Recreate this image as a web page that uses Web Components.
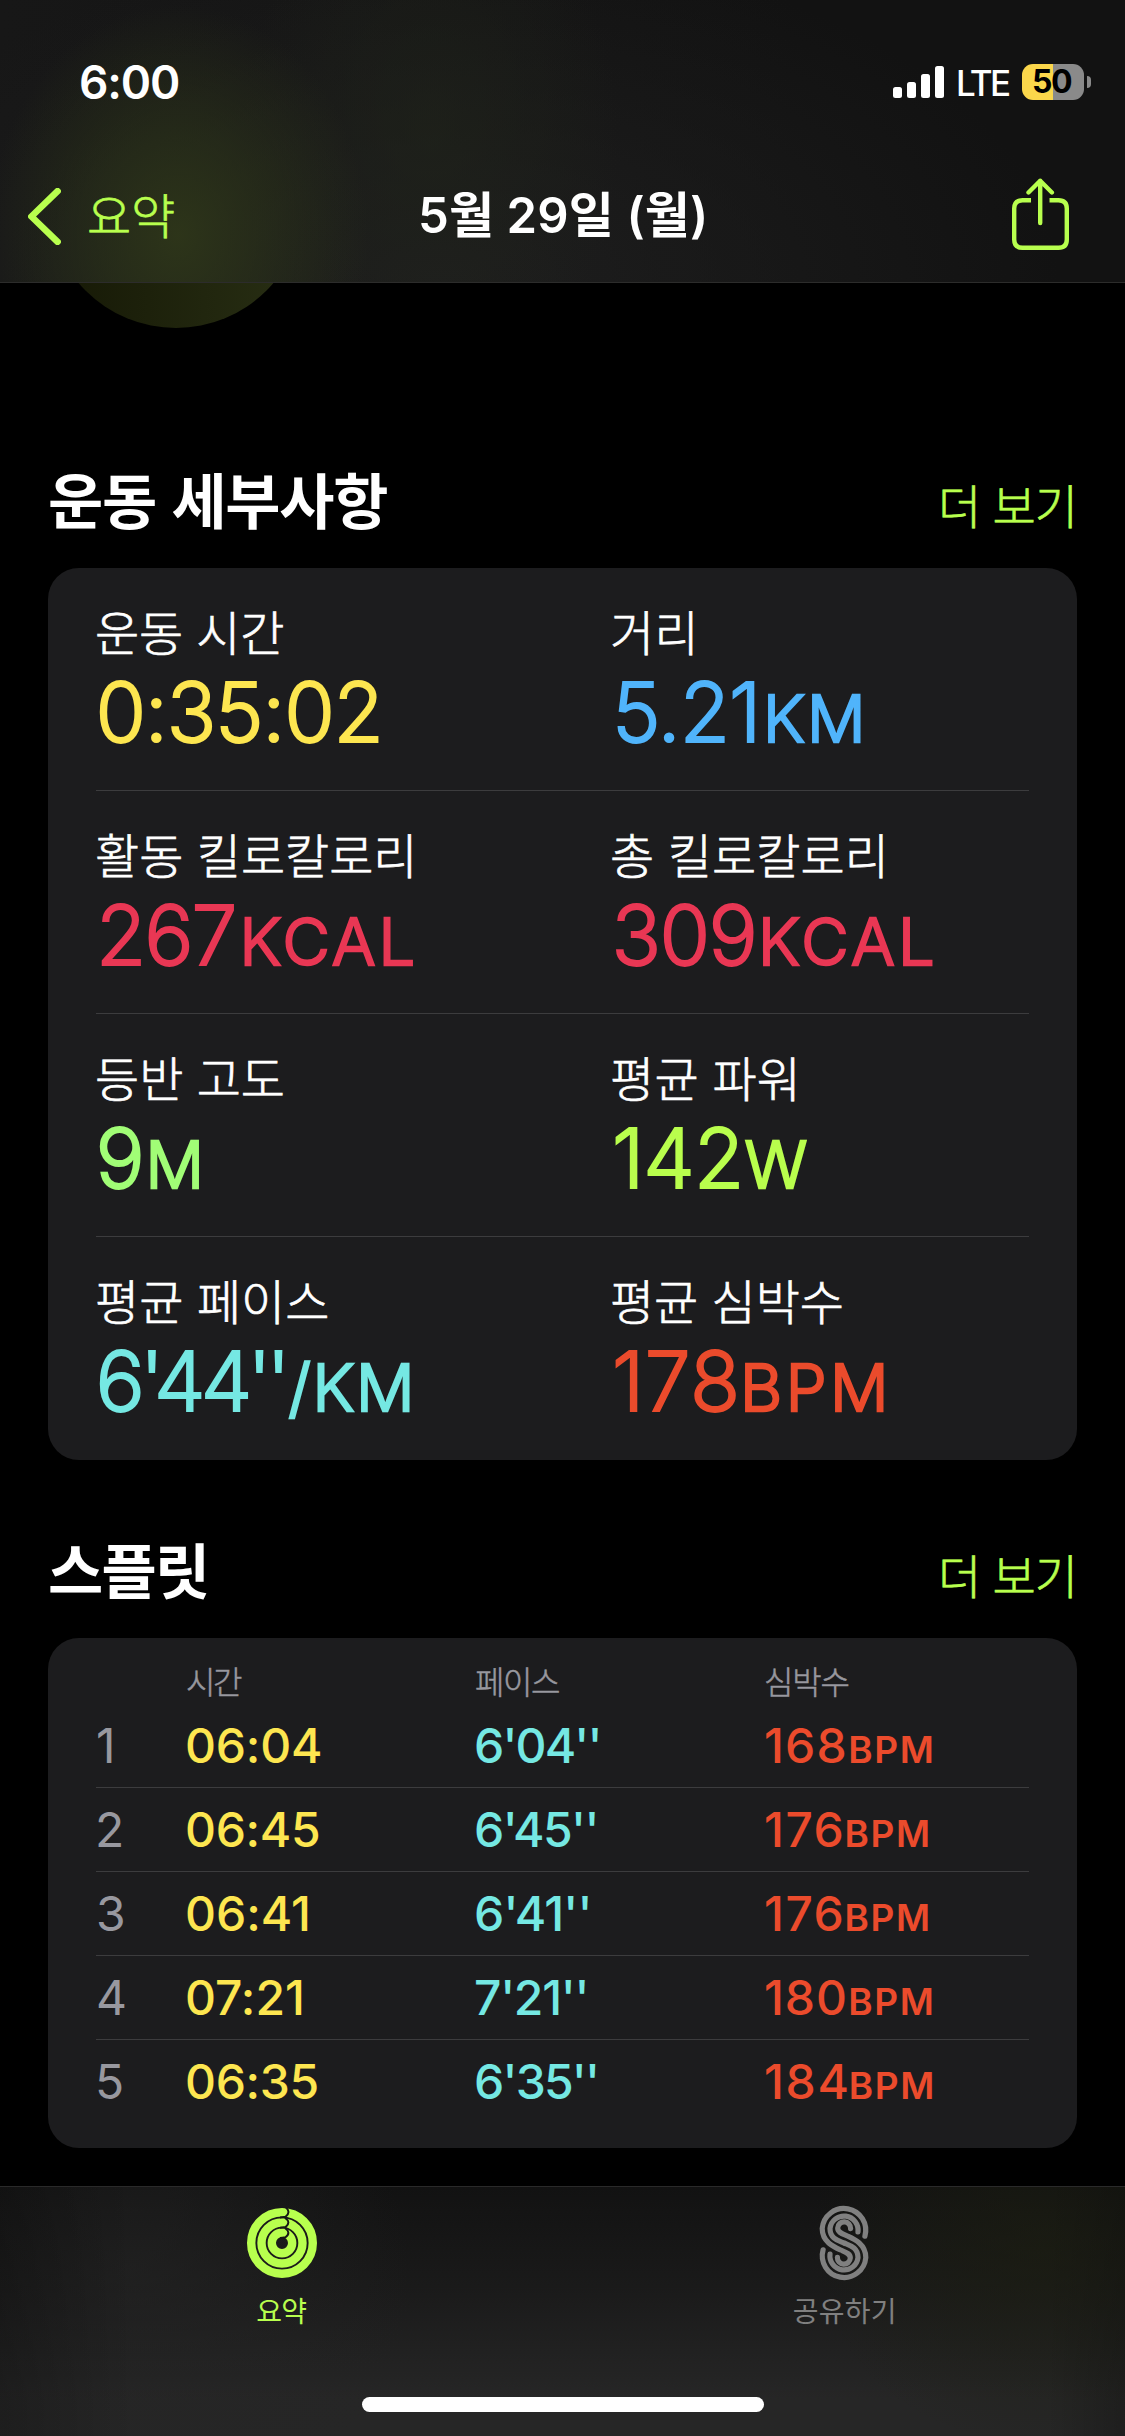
<!DOCTYPE html>
<html lang="ko">
<head>
<meta charset="utf-8">
<title>운동 요약</title>
<style>
  body {
    margin: 0;
    width: 1125px;
    height: 2436px;
    overflow: hidden;
    background: #000;
    color: #fff;
    font-family: Inter, "Noto Sans CJK KR", sans-serif;
    --lime: #b8ff4e;
    --card: #1c1c1e;
    --line: #3c3c3e;
    --gray: #98989f;
    --hangul: "Noto Sans CJK KR", sans-serif;
  }
</style>
</head>
<body>
<workout-page></workout-page>

<script>
const pen = document.createElement('canvas').getContext('2d');

// One line of text, tracked so that its ink is `ink` pixels wide.
class TextRun extends HTMLElement {
    connectedCallback() {
        const root = this.attachShadow({mode: 'open'});
        root.innerHTML = `
          <style>
            :host { display: block; flex: none; white-space: nowrap; line-height: 1; }
            span { display: inline-block; }
          </style>
          <span><slot></slot></span>
        `;
        const style = getComputedStyle(this);
        const text = this.textContent;
        const ink = Number(this.getAttribute('ink'));
        pen.font = `${style.fontWeight} ${style.fontSize} ${style.fontFamily}`;
        const box = pen.measureText(text);
        const natural = box.actualBoundingBoxLeft + box.actualBoundingBoxRight;
        const span = root.querySelector('span');
        span.style.marginLeft = box.actualBoundingBoxLeft + 'px';
        if (text.length > 1) {
            span.style.letterSpacing = (ink - natural) / (text.length - 1) + 'px';
        }
        this.style.width = ink + 'px';
    }
}
customElements.define('text-run', TextRun);

class StatusBar extends HTMLElement {
    connectedCallback() {
        this.attachShadow({mode: 'open'}).innerHTML = `
          <style>
            :host {
                display: flex;
                align-items: center;
                justify-content: space-between;
                height: 164px;
                padding: 0 34px 0 81px;
            }
            .clock { font-size: 46px; font-weight: 600; }
            .right { display: flex; align-items: center; }
            .lte { font-size: 35px; font-weight: 500; margin: 2px 13px 0 14px; }
            .battery {
                display: flex;
                align-items: center;
                justify-content: center;
                width: 62px;
                height: 36px;
                border-radius: 11px;
                background: linear-gradient(90deg, #fbd74b 50%, #8a8a8a 50%);
                color: #000;
                font-size: 32px;
                font-weight: 700;
            }
            .nub { margin-left: 3px; width: 4px; height: 12px; border-radius: 0 6px 6px 0; background: #8a8a8a; }
          </style>
          <text-run class="clock" ink="98">6:00</text-run>
          <div class="right">
            <svg width="51" height="32" fill="#fff">
              <rect x="0" y="21" width="9" height="11" rx="2.5"/>
              <rect x="14" y="16" width="9" height="16" rx="2.5"/>
              <rect x="28" y="8" width="9" height="24" rx="2.5"/>
              <rect x="42" y="0" width="9" height="32" rx="2.5"/>
            </svg>
            <text-run class="lte" ink="51">LTE</text-run>
            <div class="battery"><text-run ink="38">50</text-run></div>
            <div class="nub"></div>
          </div>
        `;
    }
}
customElements.define('status-bar', StatusBar);

class NavBar extends HTMLElement {
    connectedCallback() {
        this.attachShadow({mode: 'open'}).innerHTML = `
          <style>
            :host {
                display: grid;
                grid-template-columns: 1fr auto 1fr;
                align-items: center;
                height: 104px;
                padding: 0 56px 0 28px;
                color: var(--lime);
            }
            .back { display: flex; align-items: center; gap: 28px; font: 300 48px var(--hangul); }
            .back text-run { margin-top: -6px; -webkit-text-stroke: .7px currentColor; }
            .title { color: #fff; font-size: 49px; font-weight: 600; margin: -2px 0 0 28px; }
            .share { justify-self: end; margin-top: -5px; }
          </style>
          <div class="back">
            <svg width="33" height="57" viewBox="0 0 33 57" fill="none" stroke="currentColor" stroke-width="6.6" stroke-linecap="round" stroke-linejoin="round">
              <path d="M29.6 3.2 3.4 28.5 29.6 53.8"/>
            </svg>
            <text-run ink="85">요약</text-run>
          </div>
          <text-run class="title" ink="283">5월 29일 (월)</text-run>
          <svg class="share" width="57" height="72" viewBox="0 0 57 72" fill="none" stroke="currentColor" stroke-width="4.4">
            <path d="M19 22.2H10.5Q2.2 22.2 2.2 30.5V61.5Q2.2 69.8 10.5 69.8H46.5Q54.8 69.8 54.8 61.5V30.5Q54.8 22.2 46.5 22.2H37.5"/>
            <path d="M28.2 45V2.8M16.5 14.5 28.2 2.8 39.9 14.5" stroke-linecap="round" stroke-linejoin="round"/>
          </svg>
        `;
    }
}
customElements.define('nav-bar', NavBar);

class TopBar extends HTMLElement {
    connectedCallback() {
        this.attachShadow({mode: 'open'}).innerHTML = `
          <style>
            :host {
                display: block;
                box-sizing: border-box;
                height: 283px;
                border-bottom: 1px solid #2c2c2b;
                background:
                    radial-gradient(ellipse 190px 230px at 178px 235px, rgba(48, 57, 25, .85), rgba(44, 52, 25, .6) 45%, transparent),
                    radial-gradient(ellipse 190px 260px at 430px 140px, rgba(32, 36, 26, .6), transparent),
                    radial-gradient(ellipse 620px 340px at 440px 283px, #1e1e1e, transparent),
                    linear-gradient(90deg, #171717, #121212 70%);
            }
          </style>
          <slot></slot>
        `;
    }
}
customElements.define('top-bar', TopBar);

// The award badge, mostly scrolled away under the top bar.
class AwardBadge extends HTMLElement {
    connectedCallback() {
        this.attachShadow({mode: 'open'}).innerHTML = `
          <style>
            :host { display: flex; align-items: flex-end; height: 45px; padding-left: 48px; overflow: hidden; }
            div {
                flex: none;
                width: 256px;
                height: 256px;
                border-radius: 50%;
                background: linear-gradient(90deg, #181b07 12%, #262c12 88%);
            }
          </style>
          <div></div>
        `;
    }
}
customElements.define('award-badge', AwardBadge);

class DetailSection extends HTMLElement {
    connectedCallback() {
        this.attachShadow({mode: 'open'}).innerHTML = `
          <style>
            :host { display: block; padding: 0 48px; }
            header {
                display: flex;
                align-items: center;
                justify-content: space-between;
                height: 132px;
                padding: 0 8px 0 2px;
                font-family: var(--hangul);
            }
            .title { font-size: 60px; font-weight: 700; margin-top: -8px; }
            .more {
                font-size: 47px;
                font-weight: 300;
                color: var(--lime);
                margin-top: 3px;
                -webkit-text-stroke: .7px currentColor;
            }
            .card { background: var(--card); border-radius: 31px; overflow: hidden; }
          </style>
          <header>
            <text-run class="title" ink="${this.getAttribute('ink')}">${this.getAttribute('heading')}</text-run>
            <text-run class="more" ink="127">더 보기</text-run>
          </header>
          <div class="card"><slot></slot></div>
        `;
    }
}
customElements.define('detail-section', DetailSection);

// [label, width, colour, left inset, value, width, gap, unit, width]
const metrics = [
    [['운동 시간', 183.5, '#fde650', 4.5, '0:35:02', 277], ['거리', 80.5, '#50b4fb', 7, '5.21', 136, 15, 'KM', 91]],
    [['활동 킬로칼로리', 311.5, '#e93754', 6, '267', 131.5, 12, 'KCAL', 167], ['총 킬로칼로리', 268, '#e93754', 5.5, '309', 137, 10.6, 'KCAL', 168]],
    [['등반 고도', 183, '#a1fd76', 4.5, '9', 42, 9, 'M', 47], ['평균 파워', 180, '#b9fe4d', 5, '142', 122, 7.6, 'W', 57]],
    [['평균 페이스', 227.5, '#75e8e3', 4.5, "6'44''", 181, 7.8, '/KM', 119.6], ['평균 심박수', 227, '#eb4b2c', 5, '178', 119, 11, 'BPM', 137]]
];

class MetricGrid extends HTMLElement {
    connectedCallback() {
        const cell = ([label, lw, color, inset, value, vw, gap, unit, uw]) => `
          <div>
            <text-run class="label" ink="${lw}">${label}</text-run>
            <div class="value" style="color: ${color}; padding-left: ${inset}px">
              <text-run ink="${vw}">${value}</text-run>
              ${unit ? `<text-run class="unit" style="margin-left: ${gap}px" ink="${uw}">${unit}</text-run>` : ''}
            </div>
          </div>
        `;
        this.attachShadow({mode: 'open'}).innerHTML = `
          <style>
            :host { display: block; padding: 0 48px; }
            .row {
                display: grid;
                grid-template-columns: 515px 1fr;
                box-sizing: border-box;
                height: 223px;
                padding-top: 38px;
                border-bottom: 1px solid var(--line);
            }
            .row:last-child { border-bottom: 0; }
            .label {
                font: 300 48px/48px var(--hangul);
                padding-left: 1px;
                -webkit-text-stroke: .7px currentColor;
            }
            .value {
                display: flex;
                align-items: baseline;
                margin-top: 18px;
                font-size: 82px;
                font-weight: 300;
                -webkit-text-stroke: 1.8px currentColor;
                stroke-linejoin: round;
            }
            .unit { font-size: 65px; -webkit-text-stroke-width: 2.4px; }
          </style>
          ${metrics.map(row => `<div class="row">${row.map(cell).join('')}</div>`).join('')}
        `;
    }
}
customElements.define('metric-grid', MetricGrid);

// [time, width, pace, width, pulse, width, gap]
const splits = [
    ['06:04', 133, "6'04''", 122.5, '168', 78.5, 5.7],
    ['06:45', 132, "6'45''", 119.5, '176', 75.5, 5],
    ['06:41', 121, "6'41''", 112.5, '176', 75.5, 5],
    ['07:21', 115, "7'21''", 109.5, '180', 79, 5.3],
    ['06:35', 130.5, "6'35''", 120, '184', 80.5, 4.3]
];

class SplitTable extends HTMLElement {
    connectedCallback() {
        this.attachShadow({mode: 'open'}).innerHTML = `
          <style>
            :host { display: block; padding: 22px 48px 24px; }
            .head, .row {
                display: grid;
                grid-template-columns: 89px 289px 290px 1fr;
                align-items: center;
                box-sizing: border-box;
                padding-left: 2px;
            }
            .head { height: 44px; font: 300 32px var(--hangul); color: var(--gray); }
            .head text-run { margin-top: -5px; -webkit-text-stroke: .5px currentColor; }
            .row { height: 84px; font-size: 48px; font-weight: 500; border-bottom: 1px solid var(--line); }
            .row:last-child { border-bottom-color: transparent; }
            .index { color: var(--gray); font-weight: 400; }
            .time { color: #fde650; }
            .pace { color: #75e8e3; }
            .pulse { display: flex; align-items: baseline; color: #eb4b2c; }
            .unit { font-size: 37px; font-weight: 600; }
          </style>
          <div class="head">
            <span></span>
            <text-run ink="55">시간</text-run>
            <text-run ink="83">페이스</text-run>
            <text-run ink="82.5">심박수</text-run>
          </div>
          ${splits.map(([time, tw, pace, pw, pulse, bw, gap], i) => `
            <div class="row">
              <text-run class="index" ink="24">${i + 1}</text-run>
              <text-run class="time" ink="${tw}">${time}</text-run>
              <text-run class="pace" ink="${pw}">${pace}</text-run>
              <div class="pulse">
                <text-run ink="${bw}">${pulse}</text-run>
                <text-run class="unit" style="margin-left: ${gap}px" ink="81.5">BPM</text-run>
              </div>
            </div>
          `).join('')}
        `;
    }
}
customElements.define('split-table', SplitTable);

class TabBar extends HTMLElement {
    connectedCallback() {
        this.attachShadow({mode: 'open'}).innerHTML = `
          <style>
            :host {
                display: flex;
                flex-direction: column;
                align-items: center;
                box-sizing: border-box;
                height: 250px;
                border-top: 1px solid #2a2a2a;
                background:
                    radial-gradient(ellipse 230px 200px at 1040px 60px, rgba(28, 30, 16, .6), transparent),
                    linear-gradient(90deg, rgba(0, 0, 0, .22), transparent 12%, transparent 93%, rgba(0, 0, 0, .2)),
                    radial-gradient(ellipse 280px 260px at 130px 90px, rgba(36, 36, 36, .6), transparent),
                    linear-gradient(#121212, #1a1a1a 40%, #262626 85%);
            }
            .tabs { display: grid; grid-template-columns: 1fr 1fr; width: 100%; height: 210px; }
            .tab { display: flex; flex-direction: column; align-items: center; font: 400 28px/28px var(--hangul); color: #808080; }
            .on { color: var(--lime); padding-left: 1px; }
            .tab svg { margin-top: 15px; height: 82px; }
            .tab text-run { margin-top: 12px; line-height: 28px; }
            .home { width: 402px; height: 15px; border-radius: 8px; background: #fff; }
          </style>
          <div class="tabs">
            <div class="tab on">
              <svg width="82" viewBox="-41 -41 82 82" fill="none">
                <g stroke="currentColor" stroke-width="8.4">
                  <circle r="30.8"/><circle r="20.5"/><circle r="10.2"/>
                </g>
                <g stroke="#171717" stroke-width="2">
                  <path d="M3.5-36Q9.5-30.8 3.5-26.2 0-25.6-2-25.6"/>
                  <path d="M3-25.3Q9.5-20.5 3.5-15.9 0-15.3-2-15.3"/>
                  <path d="M3-15Q9.5-10.2 3.5-5.8 0-5-2-5"/>
                </g>
              </svg>
              <text-run ink="49">요약</text-run>
            </div>
            <div class="tab">
              <svg width="60" viewBox="-30 -41 60 82" fill="none" stroke="currentColor" stroke-width="5.2" stroke-linecap="round">
                <path id="edge" d="M20.9-6.8A21.8 21.8 0 1 0-21.8-14.6C-21.8-1-10 4-3.3 7 2 9.3 6.3 10.5 6.3 15A6.3 6.3 0 0 1-6.6 14.4"/>
                <path d="M14-11A14 14 0 1 0-14-14.6C-14-4-5-2.2 0 0 5 2.2 14 4 14 14.6A14 14 0 1 1-14 11"/>
                <use href="#edge" transform="rotate(180)"/>
              </svg>
              <text-run ink="100">공유하기</text-run>
            </div>
          </div>
          <div class="home"></div>
        `;
    }
}
customElements.define('tab-bar', TabBar);

class WorkoutPage extends HTMLElement {
    connectedCallback() {
        this.attachShadow({mode: 'open'}).innerHTML = `
          <style>
            :host { display: flex; flex-direction: column; height: 2436px; }
            .details { margin-top: 108px; }
            .splits { margin-top: 46px; }
            tab-bar { margin-top: auto; }
          </style>
          <top-bar>
            <status-bar></status-bar>
            <nav-bar></nav-bar>
          </top-bar>
          <award-badge></award-badge>
          <detail-section class="details" heading="운동 세부사항" ink="334"><metric-grid></metric-grid></detail-section>
          <detail-section class="splits" heading="스플릿" ink="157"><split-table></split-table></detail-section>
          <tab-bar></tab-bar>
        `;
    }
}
customElements.define('workout-page', WorkoutPage);
</script>
</body>
</html>
